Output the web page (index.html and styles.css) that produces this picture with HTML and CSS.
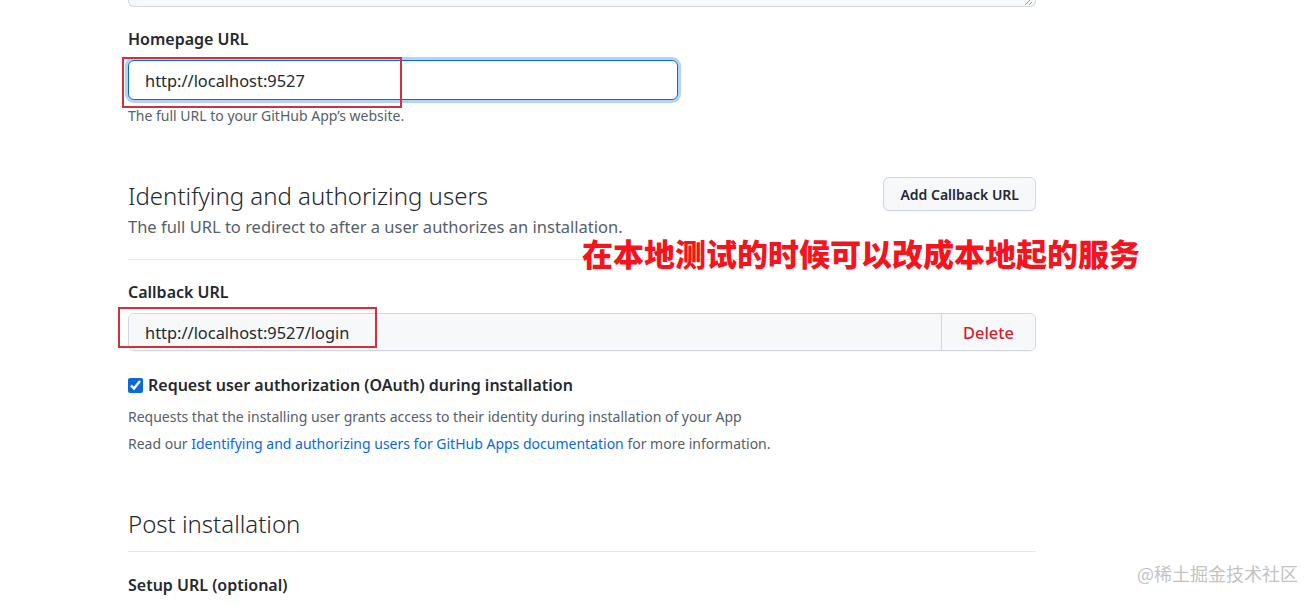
FILE: index.html
```html
<!DOCTYPE html>
<html lang="en">

<head>
    <meta charset="UTF-8">
    <title>GitHub App settings</title>
    <link rel="stylesheet" href="styles.css">
</head>

<body>
<div class="page">
    <div class="textarea-end"><span class="grip"></span></div>

    <div class="field">
        <label class="label">Homepage URL</label>
        <input class="text-input focused" type="text" value="http://localhost:9527">
        <p class="note">The full URL to your GitHub App’s website.</p>
        <div class="mark mark-home"></div>
    </div>

    <div class="section-head">
        <div>
            <h2 class="title">Identifying and authorizing users</h2>
            <p class="subtitle">The full URL to redirect to after a user authorizes an installation.</p>
        </div>
        <button class="btn">Add Callback URL</button>
    </div>
    <hr class="rule rule-first">

    <div class="field field-callback">
        <label class="label">Callback URL</label>
        <div class="input-group">
            <input class="text-input grouped" type="text" value="http://localhost:9527/login">
            <button class="btn-delete">Delete</button>
        </div>
        <div class="mark mark-callback"></div>
        <div class="annotation">在本地测试的时候可以改成本地起的服务</div>
    </div>

    <label class="check"><input type="checkbox" checked>Request user authorization (OAuth) during installation</label>
    <p class="note note-line">Requests that the installing user grants access to their identity during installation of your App</p>
    <p class="note note-line">Read our <a href="#">Identifying and authorizing users for GitHub Apps documentation</a> for more information.</p>

    <h2 class="title title-post">Post installation</h2>
    <hr class="rule rule-post">
    <label class="label label-setup">Setup URL (optional)</label>
</div>
<div class="watermark">@稀土掘金技术社区</div>
</body>

</html>
```

FILE: styles.css
```css
* {
    box-sizing: border-box;
}

body {
    margin: 0;
    background: #fff;
    color: #24292f;
    font-family: "Noto Sans", "Open Sans", "Noto Sans CJK SC", sans-serif;
    overflow: hidden;
}

.page {
    width: 908px;
    margin-left: 128px;
}

.textarea-end {
    position: relative;
    height: 7px;
    border: 1px solid #d0d7de;
    border-top: none;
    border-radius: 0 0 6px 6px;
    background: #f6f8fa;
}

.grip {
    position: absolute;
    right: 3px;
    bottom: 1px;
    width: 8px;
    height: 5px;
    background: linear-gradient(135deg, transparent 40%, #999 40%, #999 50%, transparent 50%, transparent 70%, #999 70%, #999 80%, transparent 80%);
}

.field {
    position: relative;
}

.label {
    display: block;
    margin-top: 20px;
    font-size: 16px;
    font-weight: 600;
    line-height: 24px;
}

.text-input {
    display: block;
    width: 550px;
    height: 40px;
    margin-top: 9px;
    padding: 0 16px;
    border: 1px solid #d0d7de;
    border-radius: 6px;
    background: #fff;
    color: #24292f;
    font-family: inherit;
    font-size: 16.4px;
    outline: none;
}

.text-input.focused {
    border-color: #0969da;
    box-shadow: 0 0 0 3px rgba(9, 105, 218, 0.3);
}

.note {
    margin: 6px 0 0;
    font-size: 14px;
    line-height: 20px;
    color: #57606a;
}

.note a {
    color: #0969da;
    text-decoration: none;
}

.mark {
    position: absolute;
    border: 2px solid #d0313a;
}

.mark-home {
    left: -6px;
    top: 30px;
    width: 280px;
    height: 51px;
}

.section-head {
    display: flex;
    justify-content: space-between;
    align-items: flex-start;
    margin-top: 54px;
}

.title {
    margin: 0;
    font-size: 24px;
    font-weight: 300;
    line-height: 32px;
}

.subtitle {
    margin: 3px 0 0;
    font-size: 16.5px;
    line-height: 24px;
    color: #57606a;
}

.btn {
    height: 34px;
    margin-top: -3px;
    padding: 0 16px;
    border: 1px solid #d0d7de;
    border-radius: 6px;
    background: #f6f8fa;
    color: #24292f;
    font-family: inherit;
    font-size: 14px;
    font-weight: 600;
    box-shadow: 0 1px 0 rgba(27, 31, 36, 0.04);
}

.rule {
    height: 0;
    margin: 0;
    border: none;
    border-top: 1px solid #e5e8eb;
}

.rule-first {
    margin-top: 20px;
}

.field-callback .label {
    margin-top: 20px;
}

.input-group {
    display: flex;
    margin-top: 9px;
    height: 38px;
    border: 1px solid #d0d7de;
    border-radius: 6px;
    overflow: hidden;
    box-shadow: 0 1px 0 rgba(27, 31, 36, 0.04);
}

.text-input.grouped {
    flex: 1;
    height: 100%;
    margin: 0;
    border: none;
    border-radius: 0;
    background: #f6f8fa;
}

.btn-delete {
    width: 94px;
    border: none;
    border-left: 1px solid #d0d7de;
    background: #f6f8fa;
    color: #cf222e;
    font-family: inherit;
    font-size: 16.4px;
    font-weight: 500;
}

.mark-callback {
    left: -10px;
    top: 27px;
    width: 259px;
    height: 41px;
}

.annotation {
    position: absolute;
    left: 454px;
    top: -43px;
    color: #f5141e;
    font-family: "Noto Sans CJK SC", sans-serif;
    font-size: 31px;
    font-weight: 900;
    line-height: 32px;
    white-space: nowrap;
}

.check {
    display: flex;
    align-items: center;
    gap: 5px;
    margin-top: 22px;
    font-size: 16px;
    font-weight: 600;
    line-height: 24px;
}

.check input {
    width: 15px;
    height: 15px;
    margin: 0;
    accent-color: #0969da;
}

.note-line {
    margin-top: 8px;
    font-size: 14px;
    line-height: 24px;
}

.note-line + .note-line {
    margin-top: 3px;
}

.title-post {
    margin-top: 52px;
}

.rule-post {
    margin-top: 11px;
}

.label-setup {
    margin-top: 21px;
}

.watermark {
    position: absolute;
    right: 18px;
    bottom: 18px;
    color: #c3c3c3;
    font-family: "Noto Sans CJK SC", sans-serif;
    font-size: 18px;
}
```
